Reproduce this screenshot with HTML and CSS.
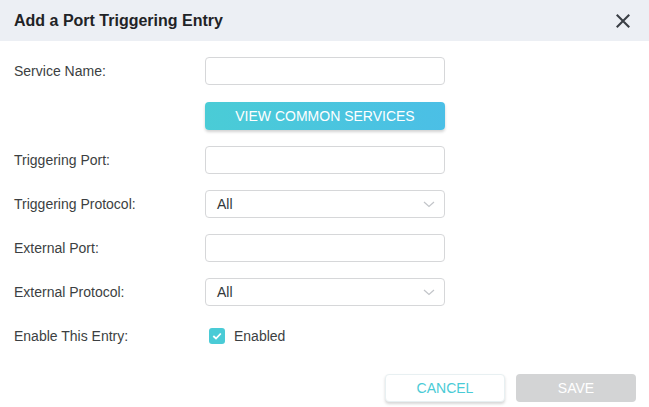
FILE: index.html
```html
<!DOCTYPE html>
<html>
<head>
<meta charset="utf-8">
<link rel="stylesheet" href="styles.css">
</head>
<body>
<div class="dialog">
  <div class="header">
    <div class="title">Add a Port Triggering Entry</div>
    <svg class="close" width="14" height="14" viewBox="0 0 14 14"><path d="M1.5 1.5 L12.5 12.5 M12.5 1.5 L1.5 12.5" stroke="#3a3f45" stroke-width="2.1" fill="none" stroke-linecap="square"/></svg>
  </div>
  <div class="form">
    <div class="row">
      <div class="label">Service Name:</div>
      <div class="control"><div class="input"></div></div>
    </div>
    <div class="row row-btn">
      <div class="label"></div>
      <div class="control"><div class="btn-view">VIEW COMMON SERVICES</div></div>
    </div>
    <div class="row">
      <div class="label">Triggering Port:</div>
      <div class="control"><div class="input"></div></div>
    </div>
    <div class="row">
      <div class="label">Triggering Protocol:</div>
      <div class="control"><div class="input select"><span>All</span><svg width="12" height="7" viewBox="0 0 12 7"><path d="M1 1 L6 5.5 L11 1" stroke="#c2c5c9" stroke-width="1.2" fill="none"/></svg></div></div>
    </div>
    <div class="row">
      <div class="label">External Port:</div>
      <div class="control"><div class="input"></div></div>
    </div>
    <div class="row">
      <div class="label">External Protocol:</div>
      <div class="control"><div class="input select"><span>All</span><svg width="12" height="7" viewBox="0 0 12 7"><path d="M1 1 L6 5.5 L11 1" stroke="#c2c5c9" stroke-width="1.2" fill="none"/></svg></div></div>
    </div>
    <div class="row">
      <div class="label">Enable This Entry:</div>
      <div class="control check-wrap">
        <span class="checkbox"><svg width="10" height="8" viewBox="0 0 10 8"><path d="M1.3 4 L4 6.5 L8.8 1.5" stroke="#fff" stroke-width="1.8" fill="none"/></svg></span>
        <span class="check-label">Enabled</span>
      </div>
    </div>
  </div>
  <div class="footer">
    <div class="btn btn-cancel">CANCEL</div>
    <div class="btn btn-save">SAVE</div>
  </div>
</div>
</body>
</html>
```
FILE: styles.css
```css
html, body {
  margin: 0;
  padding: 0;
  background: #fff;
}
body {
  font-family: "Liberation Sans", Arial, sans-serif;
  width: 649px;
  height: 407px;
  overflow: hidden;
}
.dialog {
  display: flex;
  flex-direction: column;
}
.header {
  height: 41px;
  background: #eceff4;
  display: flex;
  align-items: center;
  justify-content: space-between;
  padding: 0 19px 0 14px;
}
.title {
  font-size: 16px;
  font-weight: bold;
  color: #1f2326;
}
.close {
  display: block;
}
.form {
  padding: 16px 0 0 14px;
  display: flex;
  flex-direction: column;
  gap: 16px;
}
.row {
  display: flex;
  align-items: center;
  height: 28px;
}
.row-btn {
  margin-top: 1px;
}
.label {
  width: 191px;
  font-size: 14px;
  color: #3c3f42;
}
.control {
  width: 240px;
}
.input {
  box-sizing: border-box;
  height: 28px;
  border: 1px solid #d6d7d9;
  border-radius: 4px;
  background: #fff;
}
.select {
  display: flex;
  align-items: center;
  justify-content: space-between;
  padding: 0 9px 0 11px;
  font-size: 14px;
  color: #33373a;
}
.select svg {
  display: block;
}
.btn-view {
  height: 28px;
  border-radius: 4px;
  background: linear-gradient(90deg, #4accd6, #4bbfe6);
  color: #fff;
  font-size: 14px;
  display: flex;
  align-items: center;
  justify-content: center;
  box-shadow: 0 2px 3px rgba(0, 0, 0, 0.18);
}
.check-wrap {
  display: flex;
  align-items: center;
  padding-left: 4px;
  box-sizing: border-box;
}
.checkbox {
  width: 16px;
  height: 16px;
  border-radius: 3px;
  background: #4acbd6;
  display: flex;
  align-items: center;
  justify-content: center;
}
.checkbox svg {
  display: block;
}
.check-label {
  margin-left: 9px;
  font-size: 14px;
  color: #3c3f42;
}
.footer {
  display: flex;
  justify-content: flex-end;
  gap: 11px;
  padding: 24px 13px 0 0;
}
.btn {
  width: 120px;
  height: 28px;
  box-sizing: border-box;
  border-radius: 4px;
  display: flex;
  align-items: center;
  justify-content: center;
  font-size: 14px;
}
.btn-cancel {
  background: #fff;
  color: #4acbd6;
  border: 1px solid #e8f0f2;
  box-shadow: 0 2px 3px rgba(0, 0, 0, 0.16);
}
.btn-save {
  background: #d3d4d5;
  color: #fff;
}
```
